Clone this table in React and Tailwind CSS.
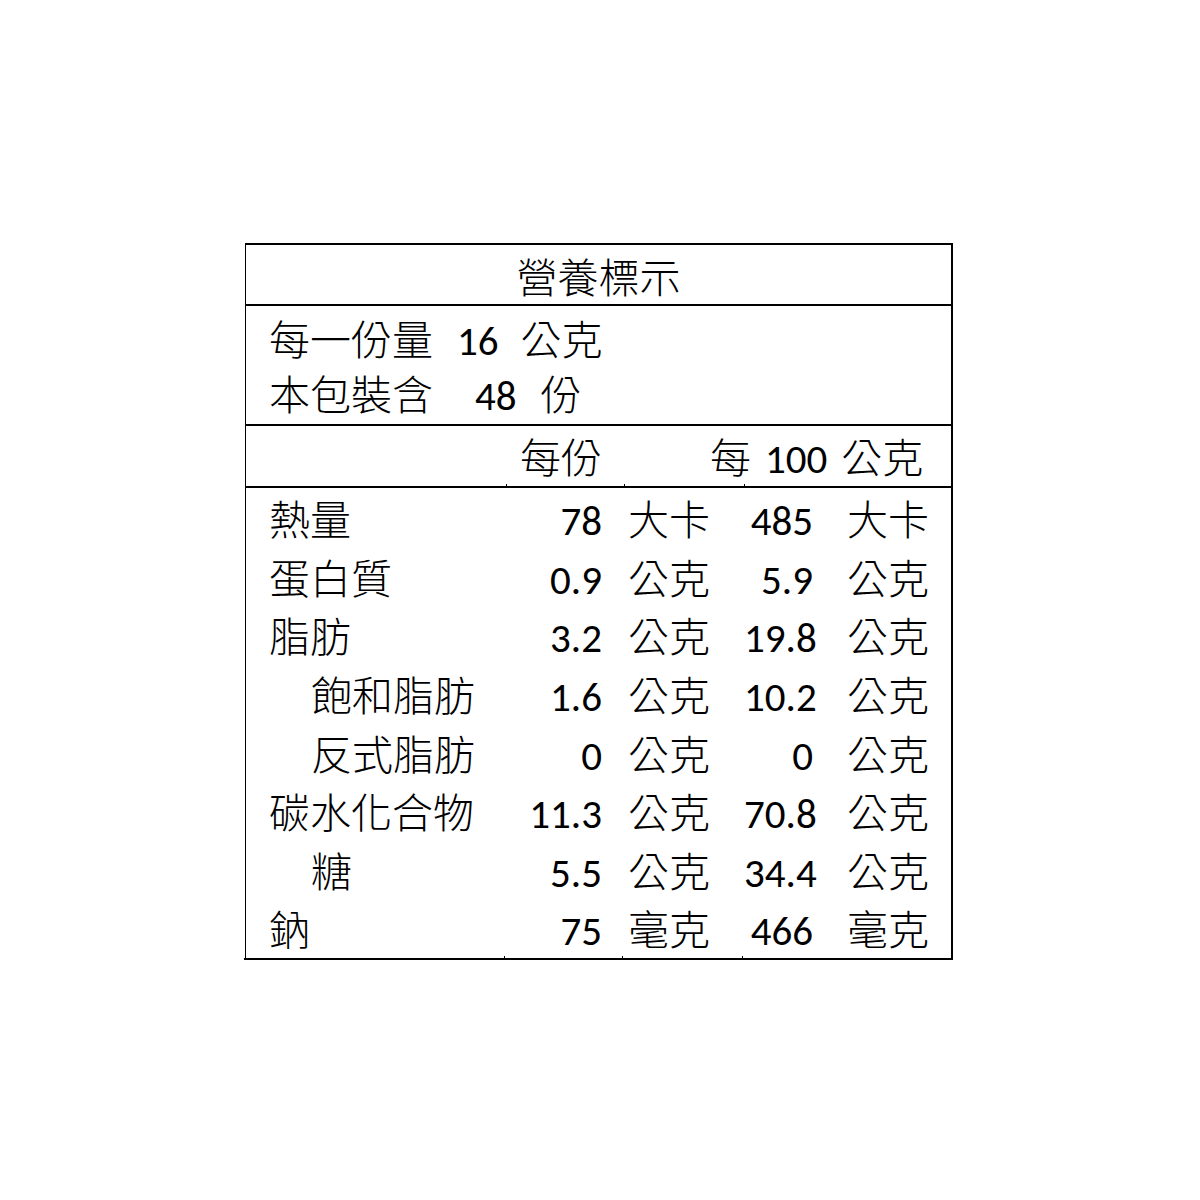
const rows = [
  { label: "熱量", v1: "78", u1: "大卡", v2: "485", u2: "大卡" },
  { label: "蛋白質", v1: "0.9", u1: "公克", v2: "5.9", u2: "公克" },
  { label: "脂肪", v1: "3.2", u1: "公克", v2: "19.8", u2: "公克" },
  { label: "飽和脂肪", v1: "1.6", u1: "公克", v2: "10.2", u2: "公克", indent: true },
  { label: "反式脂肪", v1: "0", u1: "公克", v2: "0", u2: "公克", indent: true },
  { label: "碳水化合物", v1: "11.3", u1: "公克", v2: "70.8", u2: "公克" },
  { label: "糖", v1: "5.5", u1: "公克", v2: "34.4", u2: "公克", indent: true },
  { label: "鈉", v1: "75", u1: "毫克", v2: "466", u2: "毫克" },
];

const Ticks = () => (
  <div className="flex h-0">
    <div className="w-[260px]" />
    <div className="w-[118px] h-[4px] -mt-[4px] border-l border-black" />
    <div className="w-[120px] h-[4px] -mt-[4px] border-l border-black" />
    <div className="w-[89px] h-[4px] -mt-[4px] border-l border-black" />
    <div className="flex-1" />
  </div>
);

export default function App() {
  return (
    <div
      className="w-[1200px] h-[1200px] bg-white text-black pt-[243px] pl-[245px] text-[41px] leading-none font-light"
      style={{ fontFamily: "Carlito, 'Liberation Sans', 'Noto Sans CJK TC', sans-serif" }}
    >
      <div className="w-[708px] border-t-2 border-r-2 border-l-[1.5px] border-black">
        <div className="h-[61px] pt-[9px] flex items-center justify-center border-b-2 border-black">
          營養標示
        </div>

        <div className="h-[120px] pt-[8px] flex flex-col justify-center border-b-2 border-black pl-[23px]">
          <div className="h-[59px] flex items-center">
            <span>每一份量</span>
            <span className="ml-[24px]">16</span>
            <span className="ml-[22px]">公克</span>
          </div>
          <div className="h-[59px] flex items-center">
            <span>本包裝含</span>
            <span className="ml-[42px]">48</span>
            <span className="ml-[24px]">份</span>
          </div>
        </div>

        <div className="h-[62px] pt-[7px] flex items-center border-b-2 border-black">
          <div className="w-[260px]" />
          <div className="w-[118px] text-right pr-[22px]">每份</div>
          <div className="flex-1 pl-[86px] flex items-center">
            <span>每</span>
            <span className="ml-[14px]">100</span>
            <span className="ml-[14px]">公克</span>
          </div>
        </div>
        <Ticks />

        <div className="pt-[1px]">
          {rows.map((r) => (
            <div key={r.label} className="h-[58.6px] pt-[7px] flex items-center whitespace-nowrap">
              <div className={`w-[260px] ${r.indent ? "pl-[65px]" : "pl-[23px]"}`}>{r.label}</div>
              <div className="w-[118px] text-right pr-[22px]">{r.v1}</div>
              <div className="w-[120px] pl-[4px]">{r.u1}</div>
              <div className="w-[89px] text-right pr-[20px]">{r.v2}</div>
              <div className="flex-1 pl-[14px]">{r.u2}</div>
            </div>
          ))}
        </div>
      </div>
      <div className="w-[709px] border-t-2 border-black -ml-[1px]" />
      <div className="-ml-[1px] w-[709px]">
        <Ticks />
      </div>
    </div>
  );
}
